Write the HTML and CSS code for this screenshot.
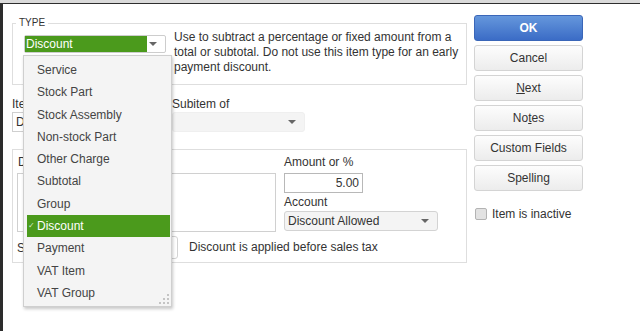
FILE: index.html
```html
<!DOCTYPE html>
<html lang="en">
<head>
  <meta charset="UTF-8" />
  <title>New Item - Discount</title>
  <link rel="stylesheet" href="styles.css">
</head>
<body>

  <div class="topbar"></div>

  <div class="window">
    <div class="main">

      <fieldset class="type-box">
        <legend>TYPE</legend>
        <div class="type-row">
          <div class="type-select">
            <span class="type-value">Discount</span>
            <span class="arrow"></span>
          </div>
          <p class="type-desc">Use to subtract a percentage or fixed amount from a total or subtotal. Do not use this item type for an early payment discount.</p>
        </div>
      </fieldset>

      <div class="item-row">
        <div class="col-name">
          <label>Item Name/Number</label>
          <div class="field">Discount</div>
        </div>
        <div class="col-sub">
          <label>Subitem of</label>
          <div class="select flat"><span class="arrow"></span></div>
        </div>
      </div>

      <div class="detail-box">
        <div class="col-desc">
          <label>Description</label>
          <div class="textarea"></div>
        </div>
        <div class="col-amount">
          <label>Amount or %</label>
          <div class="field amount">5.00</div>
          <label class="second">Account</label>
          <div class="select">Discount Allowed<span class="arrow"></span></div>
        </div>
        <div class="tax-row">
          <label class="tax-label">Sales Tax Code</label>
          <div class="tax-field"></div>
          <span class="tax-note">Discount is applied before sales tax</span>
        </div>
      </div>

      <!-- open dropdown of the TYPE select -->
      <ul class="type-menu">
        <li>Service</li>
        <li>Stock Part</li>
        <li>Stock Assembly</li>
        <li>Non-stock Part</li>
        <li>Other Charge</li>
        <li>Subtotal</li>
        <li>Group</li>
        <li class="selected">Discount</li>
        <li>Payment</li>
        <li>VAT Item</li>
        <li>VAT Group</li>
        <svg class="grip" width="10" height="10" viewBox="0 0 10 10">
          <rect x="8" y="0" width="2" height="2" fill="#c4c4c4"/>
          <rect x="4" y="4" width="2" height="2" fill="#c4c4c4"/>
          <rect x="8" y="4" width="2" height="2" fill="#c4c4c4"/>
          <rect x="0" y="8" width="2" height="2" fill="#c4c4c4"/>
          <rect x="4" y="8" width="2" height="2" fill="#c4c4c4"/>
          <rect x="8" y="8" width="2" height="2" fill="#c4c4c4"/>
        </svg>
      </ul>

    </div>

    <div class="side">
      <button class="btn ok">OK</button>
      <button class="btn">Cancel</button>
      <button class="btn"><u>N</u>ext</button>
      <button class="btn">No<u>t</u>es</button>
      <button class="btn">Custom Fields</button>
      <button class="btn">Spellin<u>g</u></button>
      <div class="inactive">
        <span class="checkbox"></span>
        <span>Item is inactive</span>
      </div>
    </div>
  </div>

</body>
</html>
```

FILE: styles.css
```css
body {
  margin: 0;
  height: 331px;
  overflow: hidden;
  background: #fff;
  font-family: "Liberation Sans", Arial, sans-serif;
  font-size: 12px;
  color: #333;
}

.topbar {
  height: 3px;
  background: #dadada;
  border-bottom: 1px solid #2e2e2e;
}

.window {
  display: flex;
  height: 327px;
  border-left: 3px solid #2c2c2c;
  padding-left: 9px;
}

.main {
  width: 455px;
  position: relative;
}

/* TYPE box */
.type-box {
  margin: 13px 0 0 0;
  padding: 0;
  min-width: 0;
  border: 1px solid #dedede;
}

.type-box legend {
  font-size: 10px;
  line-height: 12px;
  padding: 0 3px;
  margin-left: 3px;
  color: #333;
}

.type-row {
  display: flex;
  padding: 6px 0 9px 11px;
}

.type-select {
  width: 142px;
  height: 18px;
  box-sizing: border-box;
  border: 1px solid #cdcdcd;
  border-radius: 2px;
  display: flex;
  align-items: center;
  position: relative;
  flex-shrink: 0;
}

.type-value {
  width: 121px;
  height: 16px;
  line-height: 16px;
  padding-left: 1px;
  background: #4b9a1c;
  color: #fff;
}

.arrow {
  position: absolute;
  right: 8px;
  top: 50%;
  margin-top: -2px;
  width: 0;
  height: 0;
  border-left: 4px solid transparent;
  border-right: 4px solid transparent;
  border-top: 4px solid #666;
}

.type-desc {
  margin: -5px 0 0 8px;
  width: 285px;
  line-height: 15px;
}

/* item name row */
.item-row {
  display: flex;
  margin-top: 12px;
}

label {
  display: block;
  line-height: 14px;
  white-space: nowrap;
}

.col-name {
  width: 160px;
}

.field {
  height: 20px;
  box-sizing: border-box;
  border: 1px solid #cfcfcf;
  line-height: 18px;
  padding: 0 3px;
  margin-top: 1px;
  background: #fff;
}

.col-name .field {
  width: 154px;
}

.select {
  position: relative;
  height: 20px;
  box-sizing: border-box;
  border: 1px solid #d3d3d3;
  border-radius: 3px;
  background: #f4f4f4;
  line-height: 18px;
  padding: 0 3px;
}

.col-sub .select {
  width: 133px;
  margin-top: 1px;
}

.select.flat {
  border-color: #efefef;
}

/* detail box */
.detail-box {
  margin-top: 17px;
  border: 1px solid #dedede;
  height: 114px;
  box-sizing: border-box;
  padding: 5px 0 0 4px;
  display: grid;
  grid-template-columns: 259px 154px;
  column-gap: 8px;
}

.col-desc label {
  margin-left: 1px;
}

.textarea {
  margin-top: 4px;
  height: 59px;
  box-sizing: border-box;
  border: 1px solid #d0d0d0;
}

.amount {
  width: 79px;
  margin-top: 4px;
  text-align: right;
  border-color: #b8b8b8;
}

.second {
  margin-top: 2px;
}

.col-amount .select {
  margin-top: 2px;
}

.tax-row {
  grid-column: 1 / 3;
  display: flex;
  align-items: center;
  height: 23px;
  margin-top: 1px;
}

.tax-label {
  width: 83px;
}

.tax-field {
  width: 78px;
  height: 23px;
  box-sizing: border-box;
  border: 1px solid #d3d3d3;
  border-radius: 3px;
}

.tax-note {
  margin-left: 11px;
  margin-top: -1px;
}

/* dropdown list */
.type-menu {
  position: absolute;
  left: 11px;
  top: 51px;
  width: 149px;
  height: 252px;
  box-sizing: border-box;
  margin: 0;
  padding: 3px 1px 0 3px;
  list-style: none;
  background: #f4f4f4;
  border: 1px solid #cfcfcf;
  box-shadow: 1px 2px 3px rgba(0, 0, 0, 0.22);
}

.type-menu li {
  position: relative;
  height: 22.3px;
  line-height: 22.3px;
  padding-left: 10px;
  color: #444;
}

.type-menu li.selected {
  background: #4b9a1c;
  color: #fff;
}

.type-menu li.selected::before {
  content: "\2713";
  position: absolute;
  left: 1px;
  font-size: 8px;
  color: #d8ecc8;
}

.grip {
  position: absolute;
  right: 2px;
  bottom: 2px;
}

/* buttons */
.side {
  width: 109px;
  margin-left: 7px;
  padding-top: 11px;
  display: flex;
  flex-direction: column;
  gap: 4px;
}

.btn {
  height: 26px;
  padding: 0;
  border: 1px solid #d4d4d4;
  border-radius: 3px;
  background: linear-gradient(#fdfdfd, #ececec);
  font-family: "Liberation Sans", Arial, sans-serif;
  font-size: 12px;
  color: #333;
}

.btn.ok {
  background: linear-gradient(#6597dc, #3b6cc6);
  border-color: #3a66b8;
  color: #fff;
  font-weight: bold;
}

.inactive {
  display: flex;
  align-items: center;
  margin-top: 12px;
  line-height: 14px;
}

.checkbox {
  width: 12px;
  height: 12px;
  box-sizing: border-box;
  margin-left: 1px;
  margin-right: 5px;
  background: #e2e2e2;
  border: 1px solid #b3b3b3;
  border-radius: 2px;
}
```
